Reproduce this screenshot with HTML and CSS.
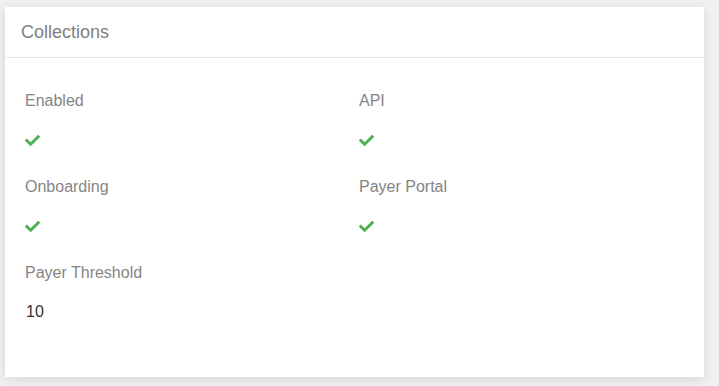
FILE: index.html
```html
<!DOCTYPE html>
<html lang="en">
<head>
  <meta charset="UTF-8" />
  <meta name="viewport" content="width=device-width, initial-scale=1" />
  <title>Collections</title>
  <link rel="stylesheet" href="styles.css">
</head>
<body>
  <div class="card">
    <div class="card-header">Collections</div>
    <div class="card-body">
      <div class="field">
        <div class="field-label">Enabled</div>
        <div class="field-value">
          <svg class="check" viewBox="0 70 512 372"><path d="M173.898 439.404l-166.4-166.4c-9.997-9.997-9.997-26.206 0-36.204l36.203-36.204c9.997-9.998 26.207-9.998 36.204 0L192 312.69 432.095 72.596c9.997-9.997 26.207-9.997 36.204 0l36.203 36.204c9.997 9.997 9.997 26.206 0 36.204l-294.4 294.401c-9.998 9.997-26.207 9.997-36.204-.001z"/></svg>
        </div>
      </div>
      <div class="field">
        <div class="field-label">API</div>
        <div class="field-value">
          <svg class="check" viewBox="0 70 512 372"><path d="M173.898 439.404l-166.4-166.4c-9.997-9.997-9.997-26.206 0-36.204l36.203-36.204c9.997-9.998 26.207-9.998 36.204 0L192 312.69 432.095 72.596c9.997-9.997 26.207-9.997 36.204 0l36.203 36.204c9.997 9.997 9.997 26.206 0 36.204l-294.4 294.401c-9.998 9.997-26.207 9.997-36.204-.001z"/></svg>
        </div>
      </div>
      <div class="field">
        <div class="field-label">Onboarding</div>
        <div class="field-value">
          <svg class="check" viewBox="0 70 512 372"><path d="M173.898 439.404l-166.4-166.4c-9.997-9.997-9.997-26.206 0-36.204l36.203-36.204c9.997-9.998 26.207-9.998 36.204 0L192 312.69 432.095 72.596c9.997-9.997 26.207-9.997 36.204 0l36.203 36.204c9.997 9.997 9.997 26.206 0 36.204l-294.4 294.401c-9.998 9.997-26.207 9.997-36.204-.001z"/></svg>
        </div>
      </div>
      <div class="field">
        <div class="field-label">Payer Portal</div>
        <div class="field-value">
          <svg class="check" viewBox="0 70 512 372"><path d="M173.898 439.404l-166.4-166.4c-9.997-9.997-9.997-26.206 0-36.204l36.203-36.204c9.997-9.998 26.207-9.998 36.204 0L192 312.69 432.095 72.596c9.997-9.997 26.207-9.997 36.204 0l36.203 36.204c9.997 9.997 9.997 26.206 0 36.204l-294.4 294.401c-9.998 9.997-26.207 9.997-36.204-.001z"/></svg>
        </div>
      </div>
      <div class="field">
        <div class="field-label">Payer Threshold</div>
        <div class="field-value text">10</div>
      </div>
    </div>
  </div>
</body>
</html>
```
FILE: styles.css
```css
body {
  margin: 0;
  padding: 7px 15px 9px 5px;
  background: #f1f1f1;
  font-family: "Liberation Sans", Arial, sans-serif;
  color: #333;
}
.card {
  background: #fff;
  box-shadow: 0 2px 10px rgba(0,0,0,0.12);
}
.card-header {
  padding: 14px 16px;
  line-height: 22px;
  font-size: 18px;
  color: #808080;
  border-bottom: 1px solid #e6e6e6;
}
.card-body {
  display: grid;
  grid-template-columns: 334px 1fr;
  padding: 33px 20px 28px 20px;
}
.field {
  height: 86px;
}
.field-label {
  font-size: 16px;
  line-height: 20px;
  color: #858585;
}
.field-value {
  margin-top: 24px;
  line-height: 0;
}
.field-value.text {
  margin-top: 19px;
  padding-left: 1px;
  font-size: 16px;
  line-height: 20px;
  color: #333;
}
.check {
  width: 15px;
  height: 11px;
  fill: #4caf50;
}
```
